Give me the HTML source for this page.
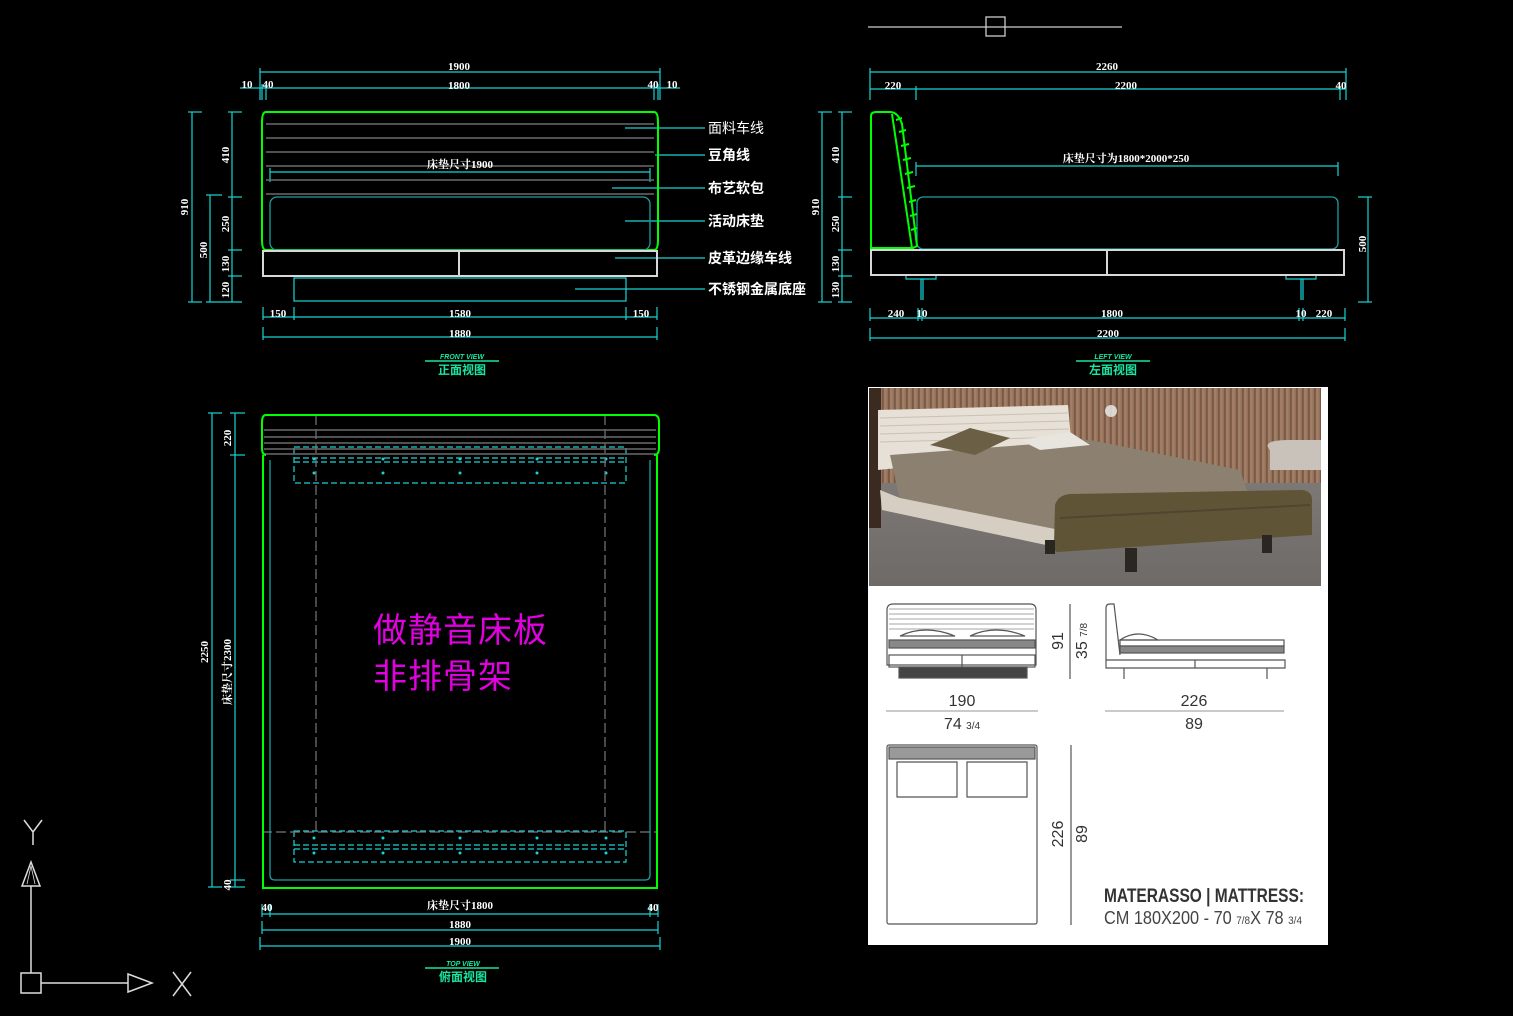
<!DOCTYPE html>
<html><head><meta charset="utf-8"><style>
html,body{margin:0;padding:0;background:#000;width:1513px;height:1016px;overflow:hidden}
svg{display:block}
.c{stroke:#19d4d4;stroke-width:1.2;fill:none}
.g{stroke:#00ff00;stroke-width:2;fill:none}
.gr{stroke:#6a6a6a;stroke-width:1.5;fill:none}
.w{stroke:#d8d8d8;stroke-width:2;fill:none}
.dc{stroke:#19a0a0;stroke-width:1.3;fill:none}
.t{font-family:"Liberation Serif","Noto Serif CJK SC",serif;font-weight:bold;fill:#fff;font-size:11px;text-anchor:middle}
.lb{font-family:"Liberation Sans","Noto Sans CJK SC",sans-serif;fill:#fff;font-size:14px;font-weight:bold}
.tt{font-family:"Liberation Sans","Noto Sans CJK SC",sans-serif;fill:#19e6a0;font-size:12px;font-weight:bold;text-anchor:middle}
.k{stroke:#555;stroke-width:1.2;fill:none}
.n{font-family:"Liberation Sans Narrow","Liberation Sans",sans-serif;fill:#333;font-size:16px;text-anchor:middle}
</style></head><body>
<svg width="1513" height="1016" viewBox="0 0 1513 1016" xmlns="http://www.w3.org/2000/svg">
<rect width="1513" height="1016" fill="#000"/>

<!-- ===== FRONT VIEW ===== -->
<g class="c">
<line x1="260" y1="72" x2="660" y2="72"/><line x1="260" y1="68" x2="260" y2="100"/><line x1="660" y1="68" x2="660" y2="100"/>
<line x1="240" y1="88" x2="680" y2="88"/><line x1="262" y1="84" x2="262" y2="100"/><line x1="266" y1="84" x2="266" y2="100"/><line x1="654" y1="84" x2="654" y2="100"/><line x1="658" y1="84" x2="658" y2="100"/>
<line x1="270" y1="172" x2="650" y2="172"/><line x1="270" y1="168" x2="270" y2="182"/><line x1="650" y1="168" x2="650" y2="182"/>
<line x1="192" y1="112" x2="192" y2="302"/><line x1="188" y1="112" x2="202" y2="112"/><line x1="188" y1="302" x2="202" y2="302"/>
<line x1="210" y1="195" x2="210" y2="302"/><line x1="206" y1="195" x2="222" y2="195"/>
<line x1="232" y1="112" x2="232" y2="302"/><line x1="228" y1="112" x2="242" y2="112"/><line x1="228" y1="197" x2="242" y2="197"/><line x1="228" y1="250" x2="242" y2="250"/><line x1="228" y1="276" x2="242" y2="276"/><line x1="206" y1="302" x2="242" y2="302"/>
<line x1="263" y1="317" x2="657" y2="317"/><line x1="263" y1="307" x2="263" y2="320"/><line x1="294" y1="307" x2="294" y2="320"/><line x1="626" y1="307" x2="626" y2="320"/><line x1="657" y1="307" x2="657" y2="320"/>
<line x1="263" y1="337" x2="657" y2="337"/><line x1="263" y1="327" x2="263" y2="340"/><line x1="657" y1="327" x2="657" y2="340"/>
<rect x="294" y="278" width="332" height="23"/>
<line x1="625" y1="128" x2="705" y2="128"/><line x1="655" y1="155" x2="705" y2="155"/><line x1="612" y1="188" x2="705" y2="188"/><line x1="625" y1="221" x2="705" y2="221"/><line x1="615" y1="258" x2="705" y2="258"/><line x1="575" y1="289" x2="705" y2="289"/>
</g>
<g class="gr">
<line x1="266" y1="124" x2="654" y2="124"/><line x1="266" y1="138" x2="654" y2="138"/><line x1="266" y1="152" x2="654" y2="152"/><line x1="266" y1="166" x2="654" y2="166"/><line x1="266" y1="180" x2="654" y2="180"/><line x1="266" y1="194" x2="654" y2="194"/>
</g>
<path class="g" d="M266 112 L654 112 Q658 112 658 122 L658 240 Q658 250 654 250 L266 250 Q262 250 262 240 L262 122 Q262 112 266 112Z"/>
<rect class="dc" x="270" y="197" width="380" height="53" rx="7"/>
<rect class="w" x="263" y="251" width="394" height="25"/><line class="w" x1="459" y1="251" x2="459" y2="276"/>
<text class="t" x="459" y="70">1900</text><text class="t" x="459" y="89">1800</text>
<text class="t" x="247" y="88">10</text><text class="t" x="268" y="88">40</text><text class="t" x="653" y="88">40</text><text class="t" x="672" y="88">10</text>
<text class="t" x="460" y="168">床垫尺寸1900</text>
<text class="t" x="278" y="317">150</text><text class="t" x="460" y="317">1580</text><text class="t" x="641" y="317">150</text><text class="t" x="460" y="337">1880</text>
<text class="t" transform="translate(188,207) rotate(-90)">910</text>
<text class="t" transform="translate(207,250) rotate(-90)">500</text>
<text class="t" transform="translate(229,155) rotate(-90)">410</text>
<text class="t" transform="translate(229,224) rotate(-90)">250</text>
<text class="t" transform="translate(229,264) rotate(-90)">130</text>
<text class="t" transform="translate(229,290) rotate(-90)">120</text>
<text class="lb" x="708" y="133" style="font-weight:normal">面料车线</text>
<text class="lb" x="708" y="160">豆角线</text><text class="lb" x="708" y="193">布艺软包</text><text class="lb" x="708" y="226">活动床垫</text><text class="lb" x="708" y="263">皮革边缘车线</text><text class="lb" x="708" y="294">不锈钢金属底座</text>
<text class="tt" x="462" y="359" style="font-size:7px;font-style:italic">FRONT VIEW</text>
<line x1="425" y1="361" x2="499" y2="361" stroke="#19e6a0" stroke-width="1.5"/>
<text class="tt" x="462" y="374">正面视图</text>

<!-- ===== SIDE VIEW ===== -->
<line x1="868" y1="27" x2="1122" y2="27" stroke="#ccc" stroke-width="1.2"/>
<rect x="986" y="17" width="19" height="19" fill="none" stroke="#ccc" stroke-width="1.3"/>
<g class="c">
<line x1="870" y1="72" x2="1346" y2="72"/><line x1="870" y1="68" x2="870" y2="100"/><line x1="1346" y1="68" x2="1346" y2="100"/>
<line x1="870" y1="89" x2="1346" y2="89"/><line x1="916" y1="86" x2="916" y2="100"/><line x1="1340" y1="86" x2="1340" y2="100"/>
<line x1="916" y1="166" x2="1338" y2="166"/><line x1="916" y1="162" x2="916" y2="176"/><line x1="1338" y1="162" x2="1338" y2="176"/>
<line x1="822" y1="112" x2="822" y2="302"/><line x1="818" y1="112" x2="832" y2="112"/><line x1="818" y1="302" x2="832" y2="302"/>
<line x1="842" y1="112" x2="842" y2="302"/><line x1="838" y1="112" x2="852" y2="112"/><line x1="838" y1="197" x2="852" y2="197"/><line x1="838" y1="250" x2="852" y2="250"/><line x1="838" y1="276" x2="852" y2="276"/><line x1="838" y1="302" x2="852" y2="302"/>
<line x1="1368" y1="197" x2="1368" y2="302"/><line x1="1358" y1="197" x2="1372" y2="197"/><line x1="1358" y1="302" x2="1372" y2="302"/>
<line x1="870" y1="318" x2="1345" y2="318"/><line x1="870" y1="308" x2="870" y2="321"/><line x1="918" y1="308" x2="918" y2="321"/><line x1="922" y1="308" x2="922" y2="321"/><line x1="1299" y1="308" x2="1299" y2="321"/><line x1="1303" y1="308" x2="1303" y2="321"/><line x1="1345" y1="308" x2="1345" y2="321"/>
<line x1="870" y1="338" x2="1345" y2="338"/><line x1="870" y1="328" x2="870" y2="341"/><line x1="1345" y1="328" x2="1345" y2="341"/>
<path d="M906 276 V279 H936 V276 M921 279 V300 M923 279 V300"/>
<path d="M1286 276 V279 H1316 V276 M1301 279 V300 M1303 279 V300"/>
</g>
<rect class="dc" x="917" y="197" width="421" height="52" rx="6"/>
<path class="g" d="M871 248 L871 116 Q871 112 876 112 L890 112 Q898 112 902 124 L917 246 L913 248 Z"/>
<path class="g" stroke-width="1.5" d="M892 114 L912 248 M896 120 L902 118 M899 132 L906 130 M901 146 L909 144 M903 160 L911 158 M905 174 L913 172 M907 188 L915 186 M909 202 L916 200 M910 216 L917 214 M911 230 L917 228"/>
<rect class="w" x="871" y="250" width="473" height="25"/><line class="w" x1="1107" y1="250" x2="1107" y2="275"/>
<text class="t" x="1107" y="70">2260</text><text class="t" x="893" y="89">220</text><text class="t" x="1126" y="89">2200</text><text class="t" x="1341" y="89">40</text>
<text class="t" x="1126" y="162">床垫尺寸为1800*2000*250</text>
<text class="t" x="896" y="317">240</text><text class="t" x="922" y="317">10</text><text class="t" x="1112" y="317">1800</text><text class="t" x="1301" y="317">10</text><text class="t" x="1324" y="317">220</text><text class="t" x="1108" y="337">2200</text>
<text class="t" transform="translate(819,207) rotate(-90)">910</text>
<text class="t" transform="translate(839,155) rotate(-90)">410</text>
<text class="t" transform="translate(839,224) rotate(-90)">250</text>
<text class="t" transform="translate(839,264) rotate(-90)">130</text>
<text class="t" transform="translate(839,290) rotate(-90)">130</text>
<text class="t" transform="translate(1366,244) rotate(-90)">500</text>
<text class="tt" x="1113" y="359" style="font-size:7px;font-style:italic">LEFT VIEW</text>
<line x1="1076" y1="361" x2="1150" y2="361" stroke="#19e6a0" stroke-width="1.5"/>
<text class="tt" x="1113" y="374">左面视图</text>

<!-- ===== TOP VIEW ===== -->
<g class="c">
<line x1="212" y1="413" x2="212" y2="887"/><line x1="208" y1="413" x2="222" y2="413"/><line x1="208" y1="887" x2="222" y2="887"/>
<line x1="235" y1="413" x2="235" y2="887"/><line x1="230" y1="413" x2="245" y2="413"/><line x1="230" y1="455" x2="245" y2="455"/><line x1="230" y1="880" x2="245" y2="880"/><line x1="230" y1="887" x2="245" y2="887"/>
<line x1="262" y1="914" x2="658" y2="914"/><line x1="262" y1="904" x2="262" y2="917"/><line x1="270" y1="904" x2="270" y2="917"/><line x1="650" y1="904" x2="650" y2="917"/><line x1="658" y1="904" x2="658" y2="917"/>
<line x1="262" y1="930" x2="658" y2="930"/><line x1="262" y1="921" x2="262" y2="934"/><line x1="658" y1="921" x2="658" y2="934"/>
<line x1="260" y1="946" x2="660" y2="946"/><line x1="260" y1="937" x2="260" y2="950"/><line x1="660" y1="937" x2="660" y2="950"/>
</g>
<g class="c" stroke-dasharray="6 3">
<rect x="294" y="447" width="332" height="36"/><line x1="294" y1="458" x2="626" y2="458"/><line x1="294" y1="462" x2="626" y2="462"/>
<rect x="294" y="831" width="332" height="31"/><line x1="294" y1="845" x2="626" y2="845"/><line x1="294" y1="849" x2="626" y2="849"/>
</g>
<g fill="#19d4d4"><circle cx="314" cy="459" r="1.5"/><circle cx="383" cy="459" r="1.5"/><circle cx="460" cy="459" r="1.5"/><circle cx="537" cy="459" r="1.5"/><circle cx="606" cy="459" r="1.5"/><circle cx="314" cy="473" r="1.5"/><circle cx="383" cy="473" r="1.5"/><circle cx="460" cy="473" r="1.5"/><circle cx="537" cy="473" r="1.5"/><circle cx="606" cy="473" r="1.5"/>
<circle cx="314" cy="838" r="1.5"/><circle cx="383" cy="838" r="1.5"/><circle cx="460" cy="838" r="1.5"/><circle cx="537" cy="838" r="1.5"/><circle cx="606" cy="838" r="1.5"/><circle cx="314" cy="853" r="1.5"/><circle cx="383" cy="853" r="1.5"/><circle cx="460" cy="853" r="1.5"/><circle cx="537" cy="853" r="1.5"/><circle cx="606" cy="853" r="1.5"/></g>
<g stroke="#777" stroke-width="1.2" stroke-dasharray="10 4" fill="none">
<line x1="316" y1="415" x2="316" y2="835"/><line x1="605" y1="415" x2="605" y2="835"/><line x1="262" y1="832" x2="658" y2="832"/>
</g>
<g class="gr"><line x1="264" y1="430" x2="656" y2="430"/><line x1="264" y1="437" x2="656" y2="437"/><line x1="264" y1="443" x2="656" y2="443"/><line x1="264" y1="449" x2="656" y2="449"/><line x1="264" y1="454" x2="656" y2="454"/></g>
<path class="dc" d="M270 460 V875 Q270 880 275 880 H645 Q650 880 650 875 V460"/>
<path class="g" stroke-width="1.5" d="M263 455 V888 H657 V455"/>
<path class="g" stroke-width="2.5" d="M266 415 H654 Q659 415 659 422 V448 Q659 455 654 455 M266 415 Q262 415 262 422 V448 Q262 455 266 455"/>
<text x="373" y="642" style="font-family:'Noto Sans CJK SC',sans-serif;font-size:34px;fill:#e000e0;letter-spacing:1px">做静音床板</text>
<text x="373" y="688" style="font-family:'Noto Sans CJK SC',sans-serif;font-size:34px;fill:#e000e0;letter-spacing:1px">非排骨架</text>
<text class="t" transform="translate(208,652) rotate(-90)">2250</text>
<text class="t" transform="translate(231,672) rotate(-90)">床垫尺寸2300</text>
<text class="t" transform="translate(231,438) rotate(-90)">220</text>
<text class="t" transform="translate(231,885) rotate(-90)">40</text>
<text class="t" x="267" y="911">40</text><text class="t" x="460" y="909">床垫尺寸1800</text><text class="t" x="653" y="911">40</text>
<text class="t" x="460" y="928">1880</text><text class="t" x="460" y="945">1900</text>
<text class="tt" x="463" y="966" style="font-size:7px;font-style:italic">TOP VIEW</text>
<line x1="425" y1="968" x2="499" y2="968" stroke="#19e6a0" stroke-width="1.5"/>
<text class="tt" x="463" y="981">俯面视图</text>

<!-- ===== UCS ===== -->
<g stroke="#ddd" stroke-width="1.5" fill="none">
<path d="M24 820 L33 832 L42 820 M33 832 V845"/>
<path d="M31 862 L22 886 H40 Z"/><path d="M31 866 L27 884 M31 866 L35 884" stroke-width="0.8"/>
<line x1="31" y1="886" x2="31" y2="973"/>
<rect x="21" y="973" width="20" height="20"/>
<line x1="41" y1="983" x2="128" y2="983"/>
<path d="M128 974 L152 983 L128 992 Z"/>
<path d="M173 972 L191 996 M191 972 L173 996"/>
</g>

<!-- ===== REFERENCE PANEL ===== -->
<rect x="868" y="387" width="460" height="558" fill="#fff"/>
<defs>
<linearGradient id="wall" x1="0" x2="1"><stop offset="0" stop-color="#7a5a44"/><stop offset="0.5" stop-color="#a8836a"/><stop offset="1" stop-color="#8d6a52"/></linearGradient>
<linearGradient id="floor" x1="0" y1="0" x2="0" y2="1"><stop offset="0" stop-color="#8a8582"/><stop offset="1" stop-color="#6e6a68"/></linearGradient>
<pattern id="slat" width="6" height="10" patternUnits="userSpaceOnUse"><rect width="6" height="10" fill="url(#wall)"/><rect width="2" height="10" fill="#5e4535" opacity="0.55"/></pattern>
</defs>
<rect x="869" y="388" width="452" height="198" fill="url(#floor)"/>
<rect x="869" y="388" width="452" height="95" fill="#a07e66"/>
<rect x="869" y="388" width="452" height="95" fill="url(#slat)" opacity="0.8"/>
<rect x="869" y="388" width="12" height="140" fill="#3a2a20"/>
<path d="M1270 450 Q1260 440 1290 440 H1321 V470 H1270Z" fill="#c8c2bb"/>
<path d="M878 410 L1068 405 L1072 450 L878 470 Z" fill="#e6e0d6"/>
<g stroke="#c9c1b4" stroke-width="1"><line x1="880" y1="418" x2="1068" y2="413"/><line x1="880" y1="426" x2="1069" y2="421"/><line x1="880" y1="434" x2="1069" y2="429"/><line x1="880" y1="442" x2="1070" y2="437"/></g>
<path d="M890 455 L1090 440 L1240 470 L1250 500 L1060 530 L900 500 Z" fill="#8c8070"/>
<path d="M930 445 L970 428 L1010 438 L975 455Z" fill="#6b6045"/>
<path d="M1020 440 L1070 432 L1090 445 L1040 450Z" fill="#e8e4de"/>
<path d="M880 490 L900 498 L1060 530 L1250 498 L1252 512 L1060 548 L882 510 Z" fill="#d6cec2"/>
<path d="M1060 530 L1250 500 V512 L1060 548Z" fill="#b9b0a3"/>
<path d="M1055 505 Q1058 495 1070 494 L1300 490 Q1312 490 1312 500 V535 L1058 552 Q1054 552 1054 545 Z" fill="#5f5536"/>
<path d="M1060 518 L1310 505" stroke="#4e4630" stroke-width="2"/>
<rect x="1125" y="548" width="12" height="24" fill="#2a2622"/><rect x="1262" y="535" width="10" height="18" fill="#2a2622"/>
<rect x="1045" y="540" width="10" height="14" fill="#2a2622"/>
<circle cx="1111" cy="411" r="6" fill="#eee" opacity="0.8"/>

<!-- line icons -->
<g class="k">
<path d="M887 640 V610 Q887 604 893 604 H1030 Q1036 604 1036 610 V665 H887 Z"/>
<g stroke="#888" stroke-width="0.8"><line x1="889" y1="609" x2="1034" y2="609"/><line x1="889" y1="614" x2="1034" y2="614"/><line x1="889" y1="619" x2="1034" y2="619"/><line x1="889" y1="624" x2="1034" y2="624"/><line x1="889" y1="629" x2="1034" y2="629"/></g>
<path d="M900 636 Q925 624 955 636 Z M970 636 Q995 624 1025 636 Z"/>
<rect x="889" y="640" width="146" height="8" fill="#888"/>
<rect x="889" y="655" width="146" height="12"/><line x1="962" y1="655" x2="962" y2="667"/>
<rect x="899" y="667" width="128" height="11" fill="#444"/>
<line x1="1070" y1="604" x2="1070" y2="679"/>
<path d="M1106 660 V608 Q1106 604 1110 604 H1114 L1120 655 M1106 660 H1285 V668 H1106 Z"/>
<path d="M1120 640 Q1138 628 1158 640 Z"/>
<rect x="1120" y="640" width="164" height="6"/><rect x="1120" y="646" width="164" height="7" fill="#888"/>
<line x1="1195" y1="660" x2="1195" y2="668"/>
<path d="M1124 668 V679 M1267 668 V679"/>
<line x1="886" y1="711" x2="1038" y2="711" stroke="#aaa"/><line x1="1105" y1="711" x2="1284" y2="711" stroke="#aaa"/>
<rect x="887" y="745" width="150" height="179" rx="2"/>
<rect x="889" y="747" width="146" height="12" fill="#999"/>
<path d="M897 762 H957 V797 H897 Z M967 762 H1027 V797 H967 Z"/>
<line x1="1071" y1="745" x2="1071" y2="925"/>
</g>
<text class="n" x="962" y="706">190</text><text class="n" x="962" y="729">74 <tspan font-size="10">3/4</tspan></text>
<text class="n" x="1194" y="706">226</text><text class="n" x="1194" y="729">89</text>
<text class="n" transform="translate(1063,641) rotate(-90)">91</text>
<text class="n" transform="translate(1087,641) rotate(-90)">35 <tspan font-size="10">7/8</tspan></text>
<text class="n" transform="translate(1063,834) rotate(-90)">226</text>
<text class="n" transform="translate(1087,834) rotate(-90)">89</text>
<text x="1104" y="902" textLength="200" lengthAdjust="spacingAndGlyphs" style="font-family:'Liberation Sans',sans-serif;font-size:19px;font-weight:bold;fill:#333">MATERASSO | MATTRESS:</text>
<text x="1104" y="924" textLength="198" lengthAdjust="spacingAndGlyphs" style="font-family:'Liberation Sans',sans-serif;font-size:18px;fill:#444">CM 180X200 - 70 <tspan font-size="11">7/8</tspan>X 78 <tspan font-size="11">3/4</tspan></text>
</svg>
</body></html>
